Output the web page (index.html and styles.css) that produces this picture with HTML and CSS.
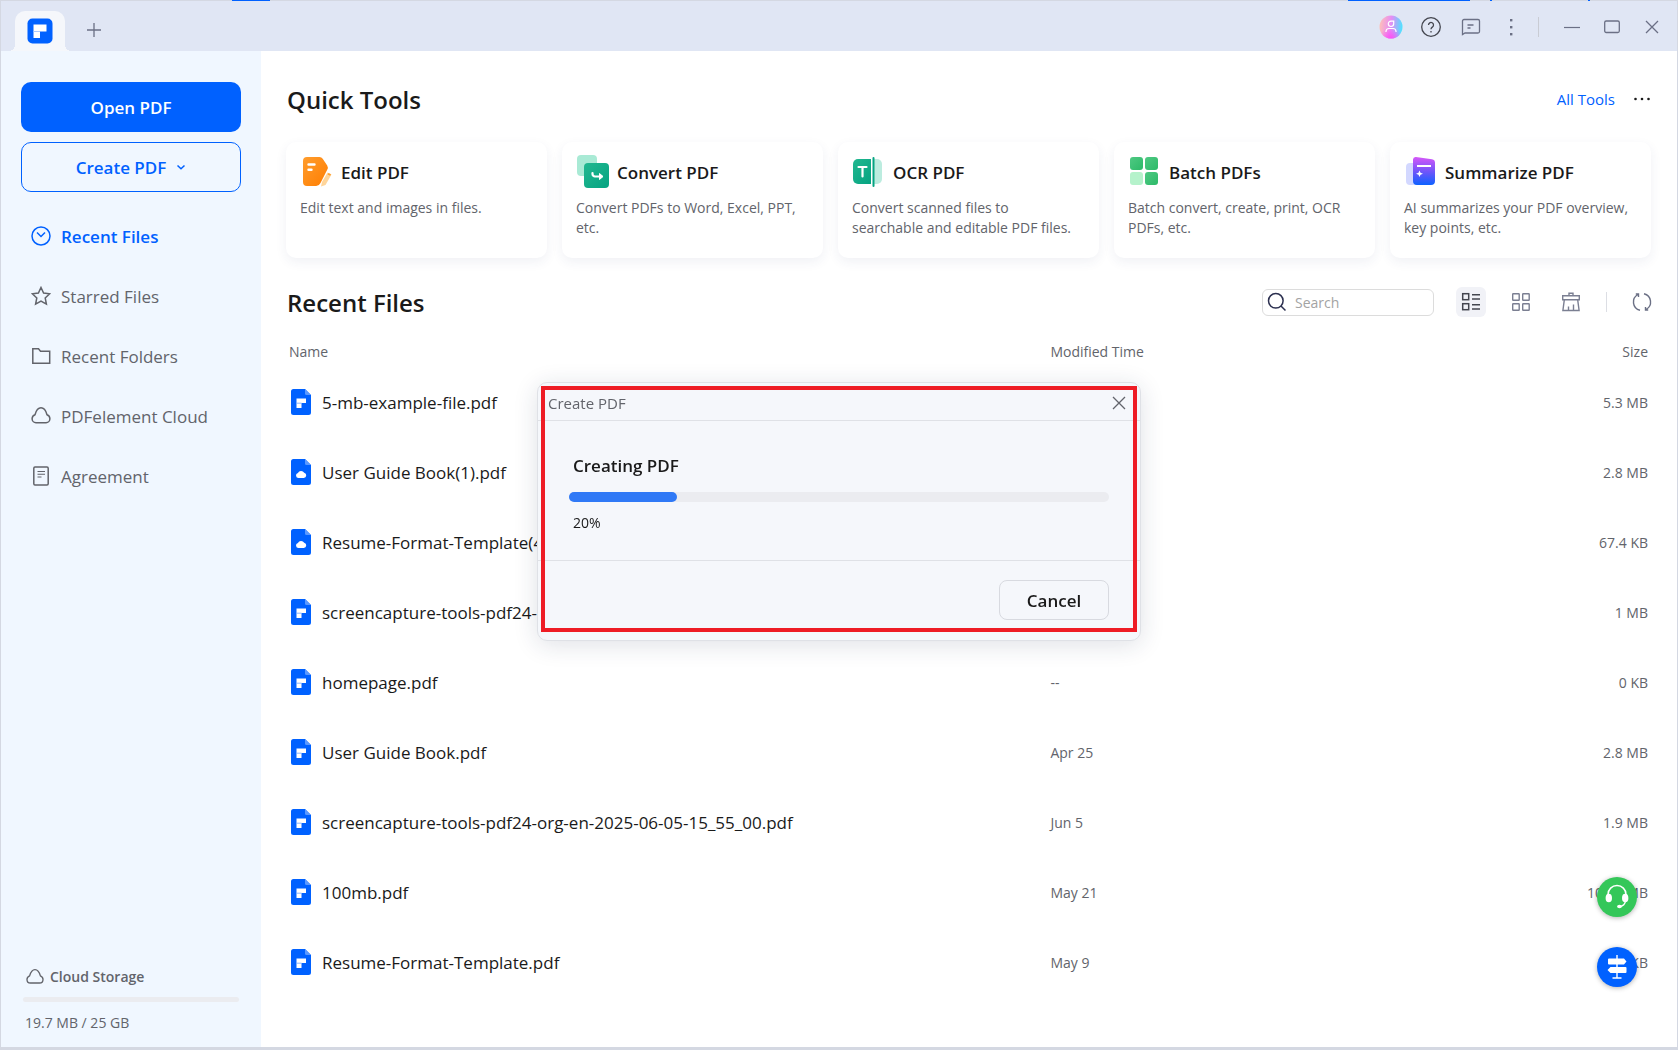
FILE: index.html
```html
<!DOCTYPE html>
<html lang="en">
<head>
    <meta charset="UTF-8">
    <meta name="viewport" content="width=device-width, initial-scale=1.0">
    <title>PDFelement</title>
    <link rel="stylesheet" href="styles.css">
</head>
<body>
    <!-- shared icons -->
    <svg class="sprite" aria-hidden="true">
        <symbol id="file-pdf" viewBox="0 0 20 26">
            <path fill="#0061ff" d="M2.5 0H14l6 6v17.500a2.500 2.500 0 0 1-2.500 2.500h-15A2.500 2.500 0 0 1 0 23.500v-21A2.500 2.500 0 0 1 2.500 0z"/>
            <path fill="#5c9aff" d="M14 0l6 6h-4.500A1.500 1.500 0 0 1 14 4.500z"/>
            <path fill="#fff" d="M5.500 9.500h9.500v4.500h-4.500v5h-5z"/>
            <path stroke="#6fa5ff" stroke-width=".8" d="M5.500 14.200h5"/>
        </symbol>
        <symbol id="file-cloud" viewBox="0 0 20 26">
            <path fill="#0061ff" d="M2.500 0H14l6 6v17.500a2.500 2.500 0 0 1-2.500 2.500h-15A2.500 2.500 0 0 1 0 23.500v-21A2.500 2.500 0 0 1 2.500 0z"/>
            <path fill="#5c9aff" d="M14 0l6 6h-4.500A1.500 1.500 0 0 1 14 4.500z"/>
            <path fill="#fff" d="M7.500 19a2.600 2.600 0 0 1-.6-5.100 3.600 3.600 0 0 1 6.300-.2A2.700 2.700 0 0 1 12.800 19z"/>
        </symbol>
        <symbol id="cloud" viewBox="0 0 20 20">
            <path fill="none" stroke="currentColor" stroke-width="1.500" d="M5 16.700a4 4 0 0 1-3.900-4c0-2 1.200-3.300 2.900-4C5.200 4.500 7.200 1.800 10 1.800s4.800 2.700 6 6.900c1.700.7 2.900 2 2.900 4a4 4 0 0 1-3.900 4z"/>
        </symbol>
        <symbol id="close" viewBox="0 0 16 16">
            <path fill="none" stroke="currentColor" stroke-width="1.300" d="M2 2l12 12M14 2L2 14"/>
        </symbol>
    </svg>

    <div class="window">
        <header class="titlebar">
            <button class="tab" aria-label="Home">
                <svg width="26" height="26" viewBox="0 0 26 26">
                    <rect x=".5" y=".5" width="25" height="25" rx="5" fill="#0061ff"/>
                    <path fill="#fff" d="M6.500 6.500h13v7h-6.500v6.500h-6.500z"/>
                    <path stroke="#a9c8ff" d="M6.500 13.500h6.500"/>
                </svg>
            </button>
            <button class="new-tab" aria-label="New tab">
                <svg width="14" height="14" viewBox="0 0 14 14"><path stroke="#6b7085" stroke-width="1.300" d="M0 7h14M7 0v14"/></svg>
            </button>
            <div class="title-actions">
                <button aria-label="Account">
                    <svg width="24" height="24" viewBox="0 0 24 24">
                        <defs>
                            <linearGradient id="avatar" x1="0" y1=".3" x2="1" y2=".4">
                                <stop offset="0" stop-color="#ffc0b8"/>
                                <stop offset=".5" stop-color="#e58cf5"/>
                                <stop offset="1" stop-color="#4de3ff"/>
                            </linearGradient>
                            <radialGradient id="avatar-glow" cx=".5" cy="1" r=".5">
                                <stop offset="0" stop-color="#ff4df5"/>
                                <stop offset="1" stop-color="#ff4df5" stop-opacity="0"/>
                            </radialGradient>
                        </defs>
                        <circle cx="12" cy="12" r="11.500" fill="url(#avatar)"/>
                        <circle cx="12" cy="12" r="11.500" fill="url(#avatar-glow)"/>
                        <path fill="none" stroke="#fff" stroke-width="1.200" d="M14.700 5.500v3.300a2.700 2.700 0 1 1-2.700-2.700h2.700M7 17v-1a3 3 0 0 1 3-2.500h4a3 3 0 0 1 3 2.500v1"/>
                    </svg>
                </button>
                <button aria-label="Help">
                    <svg width="20" height="20" viewBox="0 0 20 20" fill="none" stroke="#44464f" stroke-width="1.300">
                        <circle cx="10" cy="10" r="9.300"/>
                        <path d="M7.500 8a2.500 2.500 0 1 1 3.800 2.100c-.9.600-1.300 1-1.300 2.100M10 14v1.500"/>
                    </svg>
                </button>
                <button aria-label="Feedback">
                    <svg width="20" height="20" viewBox="0 0 20 20" fill="none" stroke="#6b7085" stroke-width="1.300">
                        <path d="M1.500 17.500V4a1.500 1.500 0 0 1 1.500-1.500h14A1.500 1.500 0 0 1 18.500 4v10.500a1.500 1.500 0 0 1-1.500 1.500H4zM6.500 8h6M6.500 11h3"/>
                    </svg>
                </button>
                <button aria-label="More">
                    <svg width="20" height="20" viewBox="0 0 20 20" fill="#6b7085"><rect x="9" y="2" width="2.400" height="2.400"/><rect x="9" y="9" width="2.400" height="2.400"/><rect x="9" y="16" width="2.400" height="2.400"/></svg>
                </button>
                <span class="divider"></span>
                <button aria-label="Minimize">
                    <svg width="16" height="16" viewBox="0 0 16 16"><path stroke="#6b7085" stroke-width="1.200" d="M0 8.500h16"/></svg>
                </button>
                <button aria-label="Maximize">
                    <svg width="16" height="16" viewBox="0 0 16 16"><rect x=".7" y="2" width="14.600" height="11.500" rx="1.500" fill="none" stroke="#6b7085" stroke-width="1.300"/></svg>
                </button>
                <button aria-label="Close">
                    <svg width="16" height="16"><use href="#close"/></svg>
                </button>
            </div>
        </header>

        <div class="body">
            <aside class="sidebar">
                <button class="btn btn-primary">Open PDF</button>
                <button class="btn btn-outline">
                    Create PDF
                    <svg width="10" height="8" viewBox="0 0 10 8"><path fill="none" stroke="#0061ff" stroke-width="1.500" d="M1.500 2.500L5 5.800l3.500-3.300"/></svg>
                </button>
                <nav class="nav">
                    <a href="#" class="active">
                        <svg width="20" height="20" viewBox="0 0 20 20" fill="none" stroke="currentColor" stroke-width="1.500"><circle cx="10" cy="10" r="9"/><path d="M6 6.500l4 4L14 6.500"/></svg>
                        Recent Files
                    </a>
                    <a href="#">
                        <svg width="20" height="20" viewBox="0 0 20 20" fill="none" stroke="currentColor" stroke-width="1.500"><path d="M10 1.500l2.600 5.600 6.100.7-4.500 4.200 1.200 6.100-5.400-3-5.400 3 1.200-6.100L1.300 7.800l6.100-.7z"/></svg>
                        Starred Files
                    </a>
                    <a href="#">
                        <svg width="20" height="20" viewBox="0 0 20 20" fill="none" stroke="currentColor" stroke-width="1.500"><path d="M1.800 17.200V2.800h5.700l2 2.500h9.200v11.900z"/></svg>
                        Recent Folders
                    </a>
                    <a href="#">
                        <svg width="20" height="20"><use href="#cloud"/></svg>
                        PDFelement Cloud
                    </a>
                    <a href="#">
                        <svg width="20" height="20" viewBox="0 0 20 20" fill="none" stroke="currentColor" stroke-width="1.500"><rect x="2.800" y="1" width="14.400" height="18" rx="1.200"/><path stroke-width="1.100" d="M6.500 5.500h7.500M6.500 8.200h7.500M6.500 11h4"/></svg>
                        Agreement
                    </a>
                </nav>
                <div class="storage">
                    <div class="storage-title">
                        <svg width="18" height="18"><use href="#cloud"/></svg>
                        Cloud Storage
                    </div>
                    <div class="storage-bar"></div>
                    <p>19.7 MB / 25 GB</p>
                </div>
            </aside>

            <main class="main">
                <div class="section-head tools-head">
                    <h1>Quick Tools</h1>
                    <a href="#" class="all-tools">All Tools</a>
                    <button class="icon-btn" aria-label="More tools">
                        <svg width="18" height="18" viewBox="0 0 18 18" fill="#1a1a1a"><circle cx="2.500" cy="9" r="1.300"/><circle cx="9" cy="9" r="1.300"/><circle cx="15.500" cy="9" r="1.300"/></svg>
                    </button>
                </div>

                <div class="cards">
                    <a href="#" class="card">
                        <h2>
                            <svg width="34" height="34" viewBox="0 0 34 34">
                                <defs><linearGradient id="orange" x1="0" y1="0" x2="1" y2="1"><stop offset="0" stop-color="#ff9d2e"/><stop offset="1" stop-color="#ff7d00"/></linearGradient></defs>
                                <path fill="url(#orange)" d="M7 2h12.500a4 4 0 0 1 3.200 1.700l4.500 6.800a4 4 0 0 1 0 4.200L20.500 28a5 5 0 0 1-4.300 3H7a4 4 0 0 1-4-4V6a4 4 0 0 1 4-4z"/>
                                <path fill="#ffd59a" d="M27.500 17.500l4 2-6 10.500-4.500 1.500 1-4.500z"/>
                                <path fill="#ff9d2e" d="M28.500 18l2.500 1.300-.9 1.500-2.500-1.300z"/>
                                <path stroke="#fff" stroke-width="2.400" stroke-linecap="round" d="M8.500 9.500h6M8.500 14.800h3"/>
                            </svg>
                            Edit PDF
                        </h2>
                        <p>Edit text and images in files.</p>
                    </a>
                    <a href="#" class="card">
                        <h2>
                            <svg width="34" height="34" viewBox="0 0 34 34">
                                <defs><linearGradient id="teal" x1="0" y1="0" x2="1" y2="1"><stop offset="0" stop-color="#22b890"/><stop offset="1" stop-color="#05a381"/></linearGradient></defs>
                                <rect x="1" y="0" width="20" height="21" rx="4" fill="#a9ead5"/>
                                <rect x="8" y="8" width="25" height="25" rx="4" fill="url(#teal)"/>
                                <path fill="none" stroke="#fff" stroke-width="2.200" stroke-linecap="round" stroke-linejoin="round" d="M16.500 18v1a2.500 2.500 0 0 0 2.500 2.500h6.500"/>
                                <path fill="#fff" stroke="#fff" stroke-linejoin="round" d="M23.500 18.500l3.500 3-3.500 3z"/>
                            </svg>
                            Convert PDF
                        </h2>
                        <p>Convert PDFs to Word, Excel, PPT, etc.</p>
                    </a>
                    <a href="#" class="card">
                        <h2>
                            <svg width="34" height="34" viewBox="0 0 34 34">
                                <path fill="#bcecdf" d="M21 4h4a5 5 0 0 1 5 5v15a5 5 0 0 1-5 5h-4z"/>
                                <path fill="url(#teal)" d="M6 4h13v25H6a5 5 0 0 1-5-5V9a5 5 0 0 1 5-5z"/>
                                <path stroke="#05a381" stroke-width="2" stroke-linecap="round" d="M21.500 3v28"/>
                                <path stroke="#fff" stroke-width="2.200" stroke-linecap="round" d="M6.500 12h8M10.500 12v9.500"/>
                            </svg>
                            OCR PDF
                        </h2>
                        <p>Convert scanned files to searchable and editable PDF files.</p>
                    </a>
                    <a href="#" class="card">
                        <h2>
                            <svg width="34" height="34" viewBox="0 0 34 34">
                                <defs><linearGradient id="green" x1="0" y1="0" x2="1" y2="1"><stop offset="0" stop-color="#4fc983"/><stop offset="1" stop-color="#2dba68"/></linearGradient></defs>
                                <rect x="2" y="2" width="13" height="13" rx="3" fill="url(#green)"/>
                                <rect x="17" y="2" width="13" height="13" rx="3" fill="url(#green)"/>
                                <rect x="2" y="17" width="13" height="13" rx="3" fill="#b5f2cb"/>
                                <rect x="17" y="17" width="13" height="13" rx="3" fill="url(#green)"/>
                            </svg>
                            Batch PDFs
                        </h2>
                        <p>Batch convert, create, print, OCR PDFs, etc.</p>
                    </a>
                    <a href="#" class="card">
                        <h2>
                            <svg width="34" height="34" viewBox="0 0 34 34">
                                <defs><linearGradient id="violet" x1="0" y1="0" x2="0" y2="1"><stop offset="0" stop-color="#d657f8"/><stop offset=".55" stop-color="#6a55fa"/><stop offset="1" stop-color="#0d62ff"/></linearGradient></defs>
                                <rect x="2" y="8" width="14" height="22" rx="4" fill="#d3d8ff"/>
                                <path fill="url(#violet)" d="M12 2l16 2.200a3.500 3.500 0 0 1 3 3.500V26a4 4 0 0 1-4 4H13a4 4 0 0 1-4-4V4.500A2.700 2.700 0 0 1 12 2z"/>
                                <path stroke="#fff" stroke-width="2" d="M13 11h14"/>
                                <path fill="#fff" d="M15.500 15.500l1 2.200 2.500 1-2.500 1-1 2.300-1-2.300-2.500-1 2.500-1z"/>
                            </svg>
                            Summarize PDF
                        </h2>
                        <p>AI summarizes your PDF overview, key points, etc.</p>
                    </a>
                </div>

                <div class="section-head files-head">
                    <h1>Recent Files</h1>
                    <label class="search">
                        <svg width="20" height="20" viewBox="0 0 20 20" fill="none" stroke="#2c3050" stroke-width="1.500"><circle cx="8.800" cy="8.800" r="7.300"/><path d="M14 14l4.500 4.500"/></svg>
                        <input type="text" placeholder="Search" aria-label="Search">
                    </label>
                    <div class="view-tools">
                        <button class="tool-btn selected" aria-label="List view">
                            <svg width="20" height="20" viewBox="0 0 20 20" fill="none" stroke="#44464f" stroke-width="1.500"><rect x="1.700" y="1.700" width="6" height="6"/><rect x="1.700" y="11.700" width="6" height="6"/><path d="M11 2.700h8M11 7h8M11 12.700h8M11 17h8"/></svg>
                        </button>
                        <button class="tool-btn" aria-label="Grid view">
                            <svg width="20" height="20" viewBox="0 0 20 20" fill="none" stroke="#7b7f92" stroke-width="1.400"><rect x="1.700" y="1.700" width="6.500" height="6.500" rx=".5"/><rect x="11.700" y="1.700" width="6.500" height="6.500" rx=".5"/><rect x="1.700" y="11.700" width="6.500" height="6.500" rx=".5"/><rect x="11.700" y="11.700" width="6.500" height="6.500" rx=".5"/></svg>
                        </button>
                        <button class="tool-btn" aria-label="Clear list">
                            <svg width="20" height="20" viewBox="0 0 20 20" fill="none" stroke="#7b7f92" stroke-width="1.400"><path d="M8 3.500V1.300h4v2.200M1.700 3.700h16.600v4.100H1.700zM3.300 7.800L1.900 18.500h16.200L16.700 7.800M7.500 18.500v-4M12.500 18.500v-6"/></svg>
                        </button>
                        <span class="divider"></span>
                        <button class="tool-btn" aria-label="Refresh">
                            <svg width="20" height="20" viewBox="0 0 20 20" fill="none" stroke="#6b7085" stroke-width="1.400"><path d="M8 18.300A8.500 8.500 0 0 1 6 2.500M3.800 2h2.700v3M12 1.700A8.500 8.500 0 0 1 14 17.500M16.200 18h-2.700v-3"/></svg>
                        </button>
                    </div>
                </div>

                <table class="files">
                    <thead>
                        <tr><th class="name">Name</th><th class="time">Modified Time</th><th class="size">Size</th></tr>
                    </thead>
                    <tbody>
                        <tr><td><div class="file"><svg width="20" height="26"><use href="#file-pdf"/></svg>5-mb-example-file.pdf</div></td><td></td><td class="size">5.3 MB</td></tr>
                        <tr><td><div class="file"><svg width="20" height="26"><use href="#file-cloud"/></svg>User Guide Book(1).pdf</div></td><td></td><td class="size">2.8 MB</td></tr>
                        <tr><td><div class="file"><svg width="20" height="26"><use href="#file-cloud"/></svg>Resume-Format-Template(4).pdf</div></td><td></td><td class="size">67.4 KB</td></tr>
                        <tr><td><div class="file"><svg width="20" height="26"><use href="#file-pdf"/></svg>screencapture-tools-pdf24-org-en.pdf</div></td><td></td><td class="size">1 MB</td></tr>
                        <tr><td><div class="file"><svg width="20" height="26"><use href="#file-pdf"/></svg>homepage.pdf</div></td><td>--</td><td class="size">0 KB</td></tr>
                        <tr><td><div class="file"><svg width="20" height="26"><use href="#file-pdf"/></svg>User Guide Book.pdf</div></td><td>Apr 25</td><td class="size">2.8 MB</td></tr>
                        <tr><td><div class="file"><svg width="20" height="26"><use href="#file-pdf"/></svg>screencapture-tools-pdf24-org-en-2025-06-05-15_55_00.pdf</div></td><td>Jun 5</td><td class="size">1.9 MB</td></tr>
                        <tr><td><div class="file"><svg width="20" height="26"><use href="#file-pdf"/></svg>100mb.pdf</div></td><td>May 21</td><td class="size">100.0 MB</td></tr>
                        <tr><td><div class="file"><svg width="20" height="26"><use href="#file-pdf"/></svg>Resume-Format-Template.pdf</div></td><td>May 9</td><td class="size">7.4 KB</td></tr>
                    </tbody>
                </table>
            </main>
        </div>
    </div>

    <div class="floating">
        <button class="fab fab-green" aria-label="Support">
            <svg width="28" height="28" viewBox="0 0 28 28">
                <path fill="none" stroke="#fff" stroke-width="1.500" d="M5 13v-1.500a9 9 0 0 1 18 0V13"/>
                <ellipse cx="5.800" cy="15" rx="3.200" ry="4.300" fill="#fff"/>
                <ellipse cx="22.200" cy="15" rx="3.200" ry="4.300" fill="#fff"/>
                <path fill="none" stroke="#fff" stroke-width="1.500" d="M22.500 18c-.5 3-2.500 5-5.500 5.500"/>
                <ellipse cx="16.500" cy="23.500" rx="2.400" ry="1.700" fill="#fff"/>
            </svg>
        </button>
        <button class="fab fab-blue" aria-label="Guide">
            <svg width="24" height="24" viewBox="0 0 24 24">
                <path stroke="#fff" stroke-width="1.400" d="M12 0v23M7.500 23h9"/>
                <path fill="#fff" d="M4 3.500h15l2.500 3-2.500 3H4a1 1 0 0 1-1-1v-4a1 1 0 0 1 1-1zM20.500 12H5.500l-3 3 3 3h15a1 1 0 0 0 1-1v-4a1 1 0 0 0-1-1z"/>
            </svg>
        </button>
    </div>

    <div class="overlay">
        <section class="modal" role="dialog" aria-labelledby="modalTitle">
            <header class="modal-head">
                <span id="modalTitle">Create PDF</span>
                <button class="icon-btn" aria-label="Close dialog"><svg width="16" height="16"><use href="#close"/></svg></button>
            </header>
            <div class="modal-body">
                <label for="progress">Creating PDF</label>
                <progress id="progress" value="20" max="100"></progress>
                <p>20%</p>
            </div>
            <footer class="modal-foot">
                <button class="cancel">Cancel</button>
            </footer>
            <div class="highlight"></div>
        </section>
    </div>
</body>
</html>
```
FILE: styles.css
```css
:root {
    --blue: #0061ff;
    --text: #1a1a1a;
    --muted: #62646b;
    --line: #dfe1e6;
    --titlebar: #e0e6f4;
    --side: #f0f7ff;
    --panel: #f5f7fb;
}
* { box-sizing: border-box; margin: 0; padding: 0; }
body {
    font-family: "Open Sans", "Noto Sans", sans-serif;
    font-size: 14px;
    color: var(--text);
    background: #cfd1d8;
    overflow: hidden;
}
button {
    font: inherit;
    color: inherit;
    background: none;
    border: none;
    cursor: pointer;
}
a { color: inherit; text-decoration: none; }
svg { display: block; flex: none; }
.sprite { position: absolute; width: 0; height: 0; }

.window {
    display: flex;
    flex-direction: column;
    height: 100vh;
    /* strip of the app behind the window */
    background:
        linear-gradient(var(--blue), var(--blue)) 232px 0 / 38px 1px no-repeat,
        linear-gradient(var(--blue), var(--blue)) right 208px top 0 / 122px 1px no-repeat,
        linear-gradient(var(--blue), var(--blue)) right 186px top 0 / 2px 1px no-repeat,
        linear-gradient(var(--blue), var(--blue)) right 88px top 0 / 2px 1px no-repeat,
        #d4d8e2;
    padding: 1px 1px 3px;
}

/* title bar */
.titlebar {
    display: flex;
    align-items: flex-end;
    flex: none;
    height: 50px;
    padding: 0 5px 0 14px;
    background: var(--titlebar);
}
.tab {
    position: relative;
    display: grid;
    place-items: center;
    width: 50px;
    height: 40px;
    background: var(--panel);
    border-radius: 10px 10px 0 0;
}
/* flared feet of the tab */
.tab::before,
.tab::after {
    content: "";
    position: absolute;
    bottom: 0;
    width: 6px;
    height: 6px;
}
.tab::before {
    right: 100%;
    background: radial-gradient(circle at 0 0, transparent 6px, var(--panel) 6px);
}
.tab::after {
    left: 100%;
    background: radial-gradient(circle at 100% 0, transparent 6px, var(--panel) 6px);
}
.new-tab {
    align-self: center;
    margin-left: 22px;
    padding-top: 8px;
}
.title-actions {
    display: flex;
    align-items: center;
    height: 50px;
    padding-top: 2px;
    margin-left: auto;
    color: #6b7085;
}
.title-actions button {
    display: grid;
    place-items: center;
    width: 40px;
    height: 40px;
}
.divider {
    width: 1px;
    height: 20px;
    background: #c9ccd4;
}
.title-actions .divider { margin: 0 13px 0 7px; }

.body { display: flex; flex: 1; min-height: 0; }

/* sidebar */
.sidebar {
    display: flex;
    flex-direction: column;
    flex: none;
    width: 260px;
    padding: 31px 20px 12px;
    background: var(--side);
}
.btn {
    display: flex;
    align-items: center;
    justify-content: center;
    gap: 10px;
    height: 50px;
    border-radius: 10px;
    font-size: 17px;
    font-weight: 600;
}
.btn-primary { background: var(--blue); color: #fff; }
.btn-outline {
    margin-top: 10px;
    border: 1px solid var(--blue);
    color: var(--blue);
}
.nav { margin-top: 14px; }
.nav a {
    display: flex;
    align-items: center;
    gap: 10px;
    height: 60px;
    padding-left: 10px;
    font-size: 17px;
    color: var(--muted);
}
.nav .active { color: var(--blue); font-weight: 600; }
.storage { margin-top: auto; color: var(--muted); }
.storage-title {
    display: flex;
    align-items: center;
    gap: 6px;
    padding-left: 5px;
    font-weight: 600;
}
.storage-bar {
    height: 5px;
    margin: 11px 2px 9px;
    border-radius: 3px;
    background: #ebecf0;
}
.storage p { padding-left: 4px; line-height: 24px; }

/* main */
.main {
    flex: 1;
    min-width: 0;
    padding: 30px 26px 0 25px;
    background: #fff;
}
.section-head {
    display: flex;
    align-items: center;
    height: 36px;
    padding-left: 1px;
}
h1 { font-size: 24px; font-weight: 600; }
.section-head h1 { margin-right: auto; }
.icon-btn { line-height: 0; }
.all-tools { margin-right: 18px; font-size: 15px; color: var(--blue); }
.cards {
    display: grid;
    grid-template-columns: repeat(5, 1fr);
    gap: 15px;
    margin-top: 25px;
}
.card {
    height: 116px;
    padding: 13px 18px 0 14px;
    border-radius: 10px;
    box-shadow: 0 4px 12px rgba(40, 60, 110, 0.07);
}
.card h2 {
    display: flex;
    align-items: center;
    gap: 7px;
    height: 34px;
    font-size: 17px;
    font-weight: 600;
}
.card p {
    margin-top: 9px;
    line-height: 20px;
    color: var(--muted);
}
.files-head { margin-top: 26px; }
.search {
    display: flex;
    align-items: center;
    gap: 8px;
    width: 172px;
    height: 27px;
    padding: 0 4px;
    border: 1px solid #dcdcdc;
    border-radius: 6px;
}
.search input {
    width: 100%;
    min-width: 0;
    border: none;
    outline: none;
    background: none;
    font: inherit;
}
.search input::placeholder { color: #a3a3a3; }
.view-tools {
    display: flex;
    align-items: center;
    gap: 20px;
    margin-left: 22px;
}
.tool-btn {
    display: grid;
    place-items: center;
    width: 30px;
    height: 30px;
    border-radius: 6px;
}
.tool-btn.selected { background: #f1f2f7; }
.tool-btn:last-child { margin-right: -6px; }
.view-tools .divider { background: #dcdee4; }

.files {
    width: 100%;
    margin-top: 16px;
    table-layout: fixed;
    border-collapse: collapse;
    color: var(--muted);
}
.files th {
    height: 31px;
    font-weight: 400;
    text-align: left;
}
.files td { height: 70px; }
.files .name { width: 56%; padding-left: 3px; }
.files .size { padding-right: 3px; text-align: right; }
.file {
    display: flex;
    align-items: center;
    gap: 11px;
    padding-left: 5px;
    font-size: 17px;
    color: var(--text);
}

/* floating help buttons */
.floating {
    position: fixed;
    right: 41px;
    bottom: 63px;
    display: flex;
    flex-direction: column;
    gap: 30px;
}
.fab {
    display: grid;
    place-items: center;
    width: 40px;
    height: 40px;
    border-radius: 50%;
    box-shadow: 0 1px 5px rgba(0, 0, 0, 0.3);
}
.fab-green { background: #34c759; }
.fab-blue { background: var(--blue); }

/* progress dialog */
.overlay {
    position: fixed;
    inset: 0;
    display: flex;
    align-items: center;
    justify-content: center;
    padding-bottom: 27px;
}
.modal {
    position: relative;
    width: 604px;
    border: 1px solid var(--line);
    border-radius: 10px;
    background: var(--panel);
    box-shadow: 0 4px 24px rgba(30, 40, 80, 0.14);
}
.modal-head {
    display: flex;
    align-items: center;
    justify-content: space-between;
    height: 38px;
    padding: 3px 13px 0 10px;
    border-bottom: 1px solid var(--line);
    font-size: 15px;
    color: var(--muted);
}
.modal-body {
    height: 140px;
    padding: 33px 31px 0;
    border-bottom: 1px solid var(--line);
}
.modal-body label {
    display: block;
    padding-left: 4px;
    font-size: 17px;
    line-height: 24px;
    font-weight: 600;
}
.modal-body p { margin-top: 11px; padding-left: 4px; }
progress {
    display: block;
    width: 100%;
    height: 10px;
    margin-top: 14px;
    border: none;
    appearance: none;
}
progress::-webkit-progress-bar { background: #ebecf0; border-radius: 5px; }
progress::-webkit-progress-value { background: #3079f6; border-radius: 5px; }
.modal-foot {
    display: flex;
    justify-content: flex-end;
    padding: 19px 31px 20px;
}
.cancel {
    width: 110px;
    height: 40px;
    border: 1px solid #d8dae0;
    border-radius: 8px;
    font-size: 17px;
    font-weight: 600;
}
.highlight {
    position: absolute;
    inset: 3px 3px 8px;
    border: 4px solid #ee1c25;
    pointer-events: none;
}
```
